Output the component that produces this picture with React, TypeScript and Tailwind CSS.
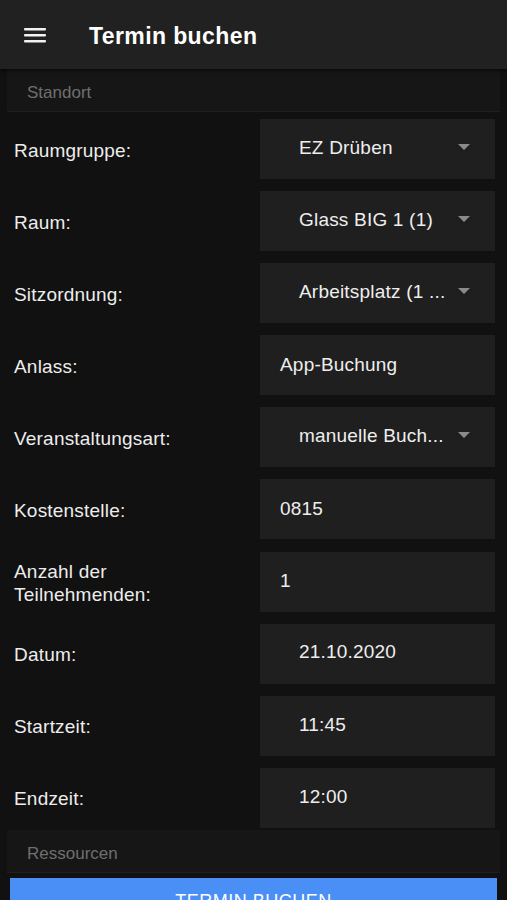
import React from 'react';

type Field = {
  label: React.ReactNode;
  value: string;
  kind: 'select' | 'input' | 'picker';
};

const fields: Field[] = [
  { label: 'Raumgruppe:', value: 'EZ Drüben', kind: 'select' },
  { label: 'Raum:', value: 'Glass BIG 1 (1)', kind: 'select' },
  { label: 'Sitzordnung:', value: 'Arbeitsplatz (1 ...', kind: 'select' },
  { label: 'Anlass:', value: 'App-Buchung', kind: 'input' },
  { label: 'Veranstaltungsart:', value: 'manuelle Buch...', kind: 'select' },
  { label: 'Kostenstelle:', value: '0815', kind: 'input' },
  {
    label: (
      <>
        Anzahl der
        <br />
        Teilnehmenden:
      </>
    ),
    value: '1',
    kind: 'input',
  },
  { label: 'Datum:', value: '21.10.2020', kind: 'picker' },
  { label: 'Startzeit:', value: '11:45', kind: 'picker' },
  { label: 'Endzeit:', value: '12:00', kind: 'picker' },
];

const SectionBar: React.FC<{ title: string }> = ({ title }) => (
  <div className="mx-[7px] h-[43px] shrink-0 flex items-center pl-[20px] pt-[6px] bg-[#161616] border-b border-[#1f1f1f] text-[17px] text-[#6f6f6f]">
    {title}
  </div>
);

const FormRow: React.FC<{ field: Field }> = ({ field }) => (
  <div className="flex items-center shrink-0">
    <div className="w-[260px] pl-[14px] pt-[2px] text-[19px] leading-[23px] text-[#ededed] tracking-[0.2px]">{field.label}</div>
    <div
      className={`w-[235px] h-[60px] flex items-center bg-[#1f1f1f] text-[19px] text-[#eeeeee] tracking-[0.2px] ${
        field.kind === 'input' ? 'pl-[20px]' : 'pl-[39px]'
      }`}
    >
      <span className={field.kind === 'select' || field.kind === 'picker' ? 'mt-[-2px]' : ''}>{field.value}</span>
      {field.kind === 'select' && (
        <svg className="ml-auto mr-[25px] mt-[-4px]" width="12" height="6" viewBox="0 0 12 6">
          <path d="M0 0h12L6 6z" fill="#8a8a8a" />
        </svg>
      )}
    </div>
  </div>
);

export default function App() {
  return (
    <div
      className="h-[900px] w-full overflow-hidden bg-[#111111] flex flex-col"
      style={{ fontFamily: '"Liberation Sans", Arial, sans-serif' }}
    >
      <header className="h-[69px] shrink-0 flex items-center bg-[#212121] shadow-[0_2px_3px_rgba(0,0,0,0.5)] relative z-10">
        <svg className="ml-[24px] mt-[1px]" width="22" height="16" viewBox="0 0 22 16">
          <rect x="0" y="1" width="22" height="2.4" rx="1" fill="#f2f2f2" />
          <rect x="0" y="7" width="22" height="2.4" rx="1" fill="#f2f2f2" />
          <rect x="0" y="13" width="22" height="2.4" rx="1" fill="#f2f2f2" />
        </svg>
        <h1 className="ml-[43px] mt-[4px] text-[23px] font-semibold text-white tracking-[0.4px]">Termin buchen</h1>
      </header>

      <SectionBar title="Standort" />

      <div className="flex flex-col gap-[12.1px] pt-[7px] pb-[2px] shrink-0">
        {fields.map((f, i) => (
          <FormRow key={i} field={f} />
        ))}
      </div>

      <SectionBar title="Ressourcen" />

      <button className="mx-[10px] mt-[5px] h-[48px] shrink-0 bg-[#4a8ff6] text-white text-[18px] uppercase tracking-[0.5px] flex justify-center pt-[10px]">
        Termin buchen
      </button>
    </div>
  );
}
